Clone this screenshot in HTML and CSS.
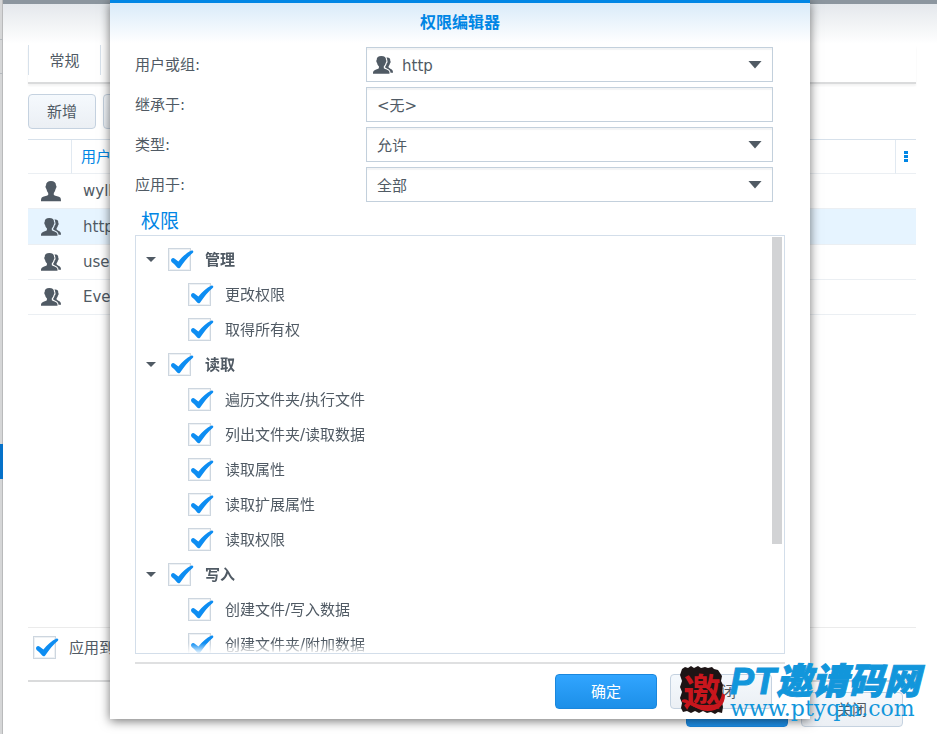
FILE: index.html
```html
<!DOCTYPE html>
<html lang="zh-CN">
<head>
    <meta charset="UTF-8">
    <meta name="viewport" content="width=device-width, initial-scale=1.0">
    <title>权限编辑器</title>
    <link rel="stylesheet" href="styles.css">
</head>
<body>
    <svg class="sprite" aria-hidden="true">
        <symbol id="tick" viewBox="0 0 26 24">
            <path d="M3 12.4C3 10.6 5 9.2 6.8 10.8L10.4 13.6C14 9 18.5 4.5 23.6 2.4C25.2 2.2 25.8 3.6 24.9 4.8C20 9 16 14 12.2 19.4C11.2 20.6 10 20.5 9.2 19.5C7.4 17 5.8 15.4 3.6 13.9Z"/>
        </symbol>
        <symbol id="user" viewBox="0 0 20 21">
            <path d="M10 0C13.2 0 15 1.6 15 4.6C15.9 5 15.5 7.2 14.6 8C14.2 10 13.4 11.2 12.8 12V14C14.5 15 18 15.4 19.2 16.6C19.9 17.5 20 19 20 20.2H0C0 19 .1 17.5.8 16.6C2 15.4 5.5 15 7.2 14V12C6.6 11.2 5.8 10 5.4 8C4.5 7.2 4.1 5 5 4.6C5 1.6 6.8 0 10 0Z"/>
        </symbol>
        <symbol id="group" viewBox="0 0 20 18">
            <path d="M8.3 0C11.6 0 13.2 1.3 13 4C13.8 4.4 13.4 6.3 12.6 6.9C12.2 8.6 11.5 9.6 10.8 10.3V12.2C12.4 13.4 15 13.7 16 15C16.5 15.8 16.5 16.8 16.5 17.8H0C0 16.8 0 15.8.6 15C1.6 13.7 4.4 13.4 5.9 12.2V10.3C5.1 9.6 4.4 8.6 4.1 6.9C3.3 6.3 2.9 4.4 3.7 4C3.6 1.3 5.2 0 8.3 0Z"/>
            <path d="M13.2 1.6C15.8 1.2 17.6 2.2 17.3 5C18 5.4 17.6 7 16.9 7.5C16.6 9 16 9.7 15.6 10.3V11.6C16.8 12.8 18.9 13.3 19.6 14.4C20 15.1 20 16 20 16.8H17.5C17.4 15.4 17 14.3 15.8 13.5C14.8 12.9 13 12.4 12.2 11.6V10.6C12.8 10 13.4 8.8 13.6 7.6C14.6 7 14.8 4.9 14.2 3.9C14.2 2.8 13.8 2 13.2 1.6Z"/>
        </symbol>
    </svg>

    <div class="desktop">
        <div class="edge">
            <div class="edge-tab"></div>
            <div class="edge-mark"></div>
        </div>

        <div class="window">
            <div class="window-head"></div>
            <nav class="tabs">
                <a class="tab" href="#">常规</a>
            </nav>
            <div class="toolbar">
                <button class="btn" type="button">新增</button>
                <button class="btn" type="button">编辑</button>
            </div>
            <table class="users">
                <thead>
                    <tr><th class="col-icon"></th><th>用户或组</th><th class="col-menu"><span class="dots"><i></i><i></i><i></i></span></th></tr>
                </thead>
                <tbody>
                    <tr><td class="col-icon"><svg class="icon icon-user"><use href="#user"/></svg></td><td colspan="2">wyll</td></tr>
                    <tr class="selected"><td class="col-icon"><svg class="icon"><use href="#group"/></svg></td><td colspan="2">http</td></tr>
                    <tr><td class="col-icon"><svg class="icon"><use href="#group"/></svg></td><td colspan="2">users</td></tr>
                    <tr><td class="col-icon"><svg class="icon"><use href="#group"/></svg></td><td colspan="2">Everyone</td></tr>
                </tbody>
            </table>
            <div class="apply">
                <label class="option"><span class="check"><input type="checkbox" checked><svg><use href="#tick"/></svg></span>应用到子文件夹</label>
            </div>
            <div class="window-foot">
                <button class="btn btn-wide btn-primary" type="button">确定</button>
                <button class="btn btn-wide" type="button">关闭</button>
            </div>
        </div>
    </div>

    <div class="dialog" role="dialog" aria-labelledby="dialog-title">
        <h1 class="dialog-title" id="dialog-title">权限编辑器</h1>
        <form class="dialog-body">
            <div class="row">
                <label for="principal">用户或组:</label>
                <div class="field has-icon">
                    <svg class="icon"><use href="#group"/></svg>
                    <select id="principal"><option>http</option></select>
                    <span class="arrow"></span>
                </div>
            </div>
            <div class="row">
                <label for="inherit">继承于:</label>
                <div class="field"><input id="inherit" type="text" value="&lt;无&gt;" readonly></div>
            </div>
            <div class="row">
                <label for="kind">类型:</label>
                <div class="field">
                    <select id="kind"><option>允许</option><option>拒绝</option></select>
                    <span class="arrow"></span>
                </div>
            </div>
            <div class="row">
                <label for="scope">应用于:</label>
                <div class="field">
                    <select id="scope"><option>全部</option></select>
                    <span class="arrow"></span>
                </div>
            </div>

            <h2 class="section">权限</h2>
            <div class="tree">
                <div class="tree-list">
                    <label class="option group"><span class="caret"></span><span class="check"><input type="checkbox" checked><svg><use href="#tick"/></svg></span>管理</label>
                    <label class="option item"><span class="check"><input type="checkbox" checked><svg><use href="#tick"/></svg></span>更改权限</label>
                    <label class="option item"><span class="check"><input type="checkbox" checked><svg><use href="#tick"/></svg></span>取得所有权</label>
                    <label class="option group"><span class="caret"></span><span class="check"><input type="checkbox" checked><svg><use href="#tick"/></svg></span>读取</label>
                    <label class="option item"><span class="check"><input type="checkbox" checked><svg><use href="#tick"/></svg></span>遍历文件夹/执行文件</label>
                    <label class="option item"><span class="check"><input type="checkbox" checked><svg><use href="#tick"/></svg></span>列出文件夹/读取数据</label>
                    <label class="option item"><span class="check"><input type="checkbox" checked><svg><use href="#tick"/></svg></span>读取属性</label>
                    <label class="option item"><span class="check"><input type="checkbox" checked><svg><use href="#tick"/></svg></span>读取扩展属性</label>
                    <label class="option item"><span class="check"><input type="checkbox" checked><svg><use href="#tick"/></svg></span>读取权限</label>
                    <label class="option group"><span class="caret"></span><span class="check"><input type="checkbox" checked><svg><use href="#tick"/></svg></span>写入</label>
                    <label class="option item"><span class="check"><input type="checkbox" checked><svg><use href="#tick"/></svg></span>创建文件/写入数据</label>
                    <label class="option item"><span class="check"><input type="checkbox" checked><svg><use href="#tick"/></svg></span>创建文件夹/附加数据</label>
                </div>
                <div class="scroll-thumb"></div>
            </div>
            <div class="dialog-foot">
                <button class="btn btn-wide btn-primary" type="button">确定</button>
                <button class="btn btn-wide" type="button">关闭</button>
            </div>
        </form>
    </div>

    <div class="watermark">
        <div class="seal">
            <svg class="seal-ink" viewBox="0 0 48 52">
                <path d="M4 5L7 3L10 4L13 2L16 4L20 2L23 4L27 3L30 4L34 3L36 5L40 6L42 9L44 12L43 17L45 21L44 27L45 32L44 38L45 43L44 49L40 48L37 50L33 48L29 49L25 47L21 49L17 47L13 49L9 47L5 48L3 44L4 39L2 34L4 28L2 23L4 17L2 11Z"/>
                <path class="seal-swash" d="M4 36C8 34 10 37 14 39C19 41 24 42 30 42C38 42 43 38 44 29L47 31C47 41 40 47 30 47C20 47 14 40 4 38Z"/>
            </svg>
            <span class="seal-char">邀</span>
        </div>
        <div class="brand">
            <div class="brand-name">PT邀请码网</div>
            <div class="brand-url">www.ptyqm.com</div>
        </div>
    </div>
</body>
</html>
```
FILE: styles.css
```css
* {
    box-sizing: border-box;
}
body {
    margin: 0;
    background: #fff;
    color: #505a64;
    font: 15px/20px "DejaVu Sans", "Noto Sans CJK SC", sans-serif;
    overflow: hidden;
}
button, input, select {
    font: inherit;
    color: inherit;
}
.sprite {
    display: none;
}
.desktop {
    display: flex;
    height: 100vh;
}

/* strip of the window behind */
.edge {
    width: 3px;
    background: #d5d6d7;
    box-shadow: inset -1px 0 0 #b9babb;
}
.edge-tab {
    height: 35px;
    margin-top: 39px;
    border: 1px solid #b5b9bd;
    border-width: 1px 0;
}
.edge-mark {
    height: 35px;
    margin-top: 370px;
    background: #0571c9;
}

/* back window */
.window {
    flex: 1;
    display: flex;
    flex-direction: column;
    padding: 0 21px 7px 25px;
    border-top: 4px solid #8c969f;
    background: linear-gradient(#e4e8ec, #fff 40px);
}
.window-head {
    height: 41px;
}
.tabs {
    display: flex;
    height: 39px;
    border-bottom: 2px solid #dadbdc;
    box-shadow: 0 2px 2px #f3f3f3;
}
.tab {
    width: 73px;
    height: 30px;
    border: 1px solid #d7e1eb;
    border-width: 0 1px;
    line-height: 32px;
    text-align: center;
    color: inherit;
    text-decoration: none;
}
.toolbar {
    display: flex;
    gap: 7px;
    padding: 10px 0;
}
.btn {
    min-width: 68px;
    height: 35px;
    padding: 0 10px;
    border: 1px solid #c5d2e0;
    border-radius: 4px;
    background: linear-gradient(#f5f9fd, #ebeff4);
}
.btn-wide {
    width: 102px;
}
.btn-primary {
    border-color: #1a87dd;
    background: linear-gradient(#31a5ff, #1c8fe8);
    color: #fff;
}
.users {
    width: 100%;
    border-spacing: 0;
    border-top: 1px solid #d7e1eb;
}
.users th, .users td {
    height: 35px;
    padding: 0 0 0 11px;
    border-bottom: 1px solid #ebeff3;
    text-align: left;
}
.users th {
    height: 34px;
    padding-left: 9px;
    font-weight: normal;
    color: #0086e5;
}
.users .col-icon {
    width: 44px;
    padding: 0 0 0 13px;
}
.users th.col-icon {
    border-right: 1px solid #e1e9f1;
}
.users .col-menu {
    width: 21px;
    padding: 0 0 0 8px;
    border-left: 1px solid #e1e9f1;
}
.users .selected td {
    height: 36px;
    background: #e6f4ff;
}
.dots {
    display: grid;
    gap: 1px;
}
.dots i {
    width: 4px;
    height: 3px;
    background: #0086e5;
}
.icon {
    display: block;
    width: 20px;
    height: 18px;
    fill: #505a64;
}
.icon-user {
    height: 21px;
}
.apply {
    margin-top: auto;
    padding: 2px 0 15px 5px;
    border-top: 1px solid #ebebeb;
    border-bottom: 2px solid #dadbdc;
}
.window-foot, .dialog-foot {
    display: flex;
    justify-content: flex-end;
    gap: 13px;
    padding: 10px 13px 0 0;
}

/* check boxes */
.option {
    display: flex;
    align-items: center;
    height: 35px;
}
.check {
    display: grid;
    width: 26px;
    height: 24px;
    margin-right: 10px;
}
.check input, .check svg {
    grid-area: 1 / 1;
}
.check input {
    appearance: none;
    width: 23px;
    height: 23px;
    margin: 0;
    border: 1px solid #cdd6df;
    background: #fff;
    box-shadow: inset 0 0 0 1px #eef1f4;
}
.check svg {
    width: 26px;
    height: 24px;
    fill: #0d8df2;
    pointer-events: none;
}
.check input:not(:checked) + svg {
    visibility: hidden;
}

/* permission editor */
.dialog {
    position: absolute;
    top: 0;
    left: 110px;
    right: 127px;
    border-top: 3px solid #0086e5;
    background: linear-gradient(#d9ebf9, #fff 40px);
    box-shadow: 0 2px 10px rgba(0, 0, 0, 0.55);
}
.dialog-title {
    margin: 0;
    height: 44px;
    font-size: 16px;
    line-height: 40px;
    text-align: center;
    color: #0086e5;
}
.dialog-body {
    padding: 0 25px 10px;
}
.row {
    display: flex;
    height: 35px;
    margin: 0 12px 5px 0;
}
.row label {
    width: 231px;
    line-height: 36px;
}
.field {
    flex: 1;
    display: flex;
    align-items: center;
    height: 35px;
    padding: 0 10px;
    border: 1px solid #c3d0dc;
    background: #fff;
    box-shadow: inset 0 2px 1px #f3f4f5;
}
.has-icon {
    gap: 9px;
    padding-left: 6px;
}
.field select, .field input {
    appearance: none;
    flex: 1;
    min-width: 0;
    height: 33px;
    padding: 0;
    border: none;
    outline: none;
    background: none;
}
.field select {
    padding-top: 2px;
}
.arrow {
    width: 14px;
    height: 8px;
    background: #505a64;
    clip-path: polygon(0 0, 100% 0, 50% 100%);
    pointer-events: none;
}
.section {
    margin: 0;
    padding-left: 6px;
    font-size: 19px;
    font-weight: normal;
    line-height: 28px;
    color: #0086e5;
}
.tree {
    display: flex;
    height: 419px;
    padding: 1px 2px 0 10px;
    border: 1px solid #d3deea;
}
.tree-list {
    flex: 1;
    padding-top: 5px;
    overflow: hidden;
    -webkit-mask-image: linear-gradient(#000 406px, transparent 417px);
    mask-image: linear-gradient(#000 406px, transparent 417px);
}
.tree .check {
    margin-right: 11px;
}
.group {
    font-weight: bold;
}
.item {
    padding-left: 42px;
}
.caret {
    width: 10px;
    height: 5px;
    margin-right: 12px;
    background: #505a64;
    clip-path: polygon(0 0, 100% 0, 50% 100%);
}
.scroll-thumb {
    width: 10px;
    height: 307px;
    background: #d2d3d5;
}
.dialog-foot {
    margin-top: 8px;
    border-top: 2px solid #dfe0e1;
}

/* site mark over the lower right corner */
.watermark {
    position: absolute;
    right: 17px;
    bottom: 16px;
    display: flex;
    gap: 4px;
    pointer-events: none;
}
.seal {
    display: grid;
    place-items: center;
    width: 48px;
    height: 52px;
}
.seal > * {
    grid-area: 1 / 1;
}
.seal-ink {
    width: 48px;
    height: 52px;
    fill: #1d1415;
}
.seal-swash {
    fill: #c8161d;
}
.seal-char {
    font: bold 38px/44px "Noto Sans CJK SC", sans-serif;
    color: #c8161d;
}
.brand {
    color: #1296db;
}
.brand-name {
    font: italic 900 36px/36px "Liberation Sans", "Noto Sans CJK SC", sans-serif;
    -webkit-text-stroke: 1px #1296db;
    white-space: nowrap;
}
.brand-url {
    font: 22px/18px "DejaVu Serif", serif;
}
```
